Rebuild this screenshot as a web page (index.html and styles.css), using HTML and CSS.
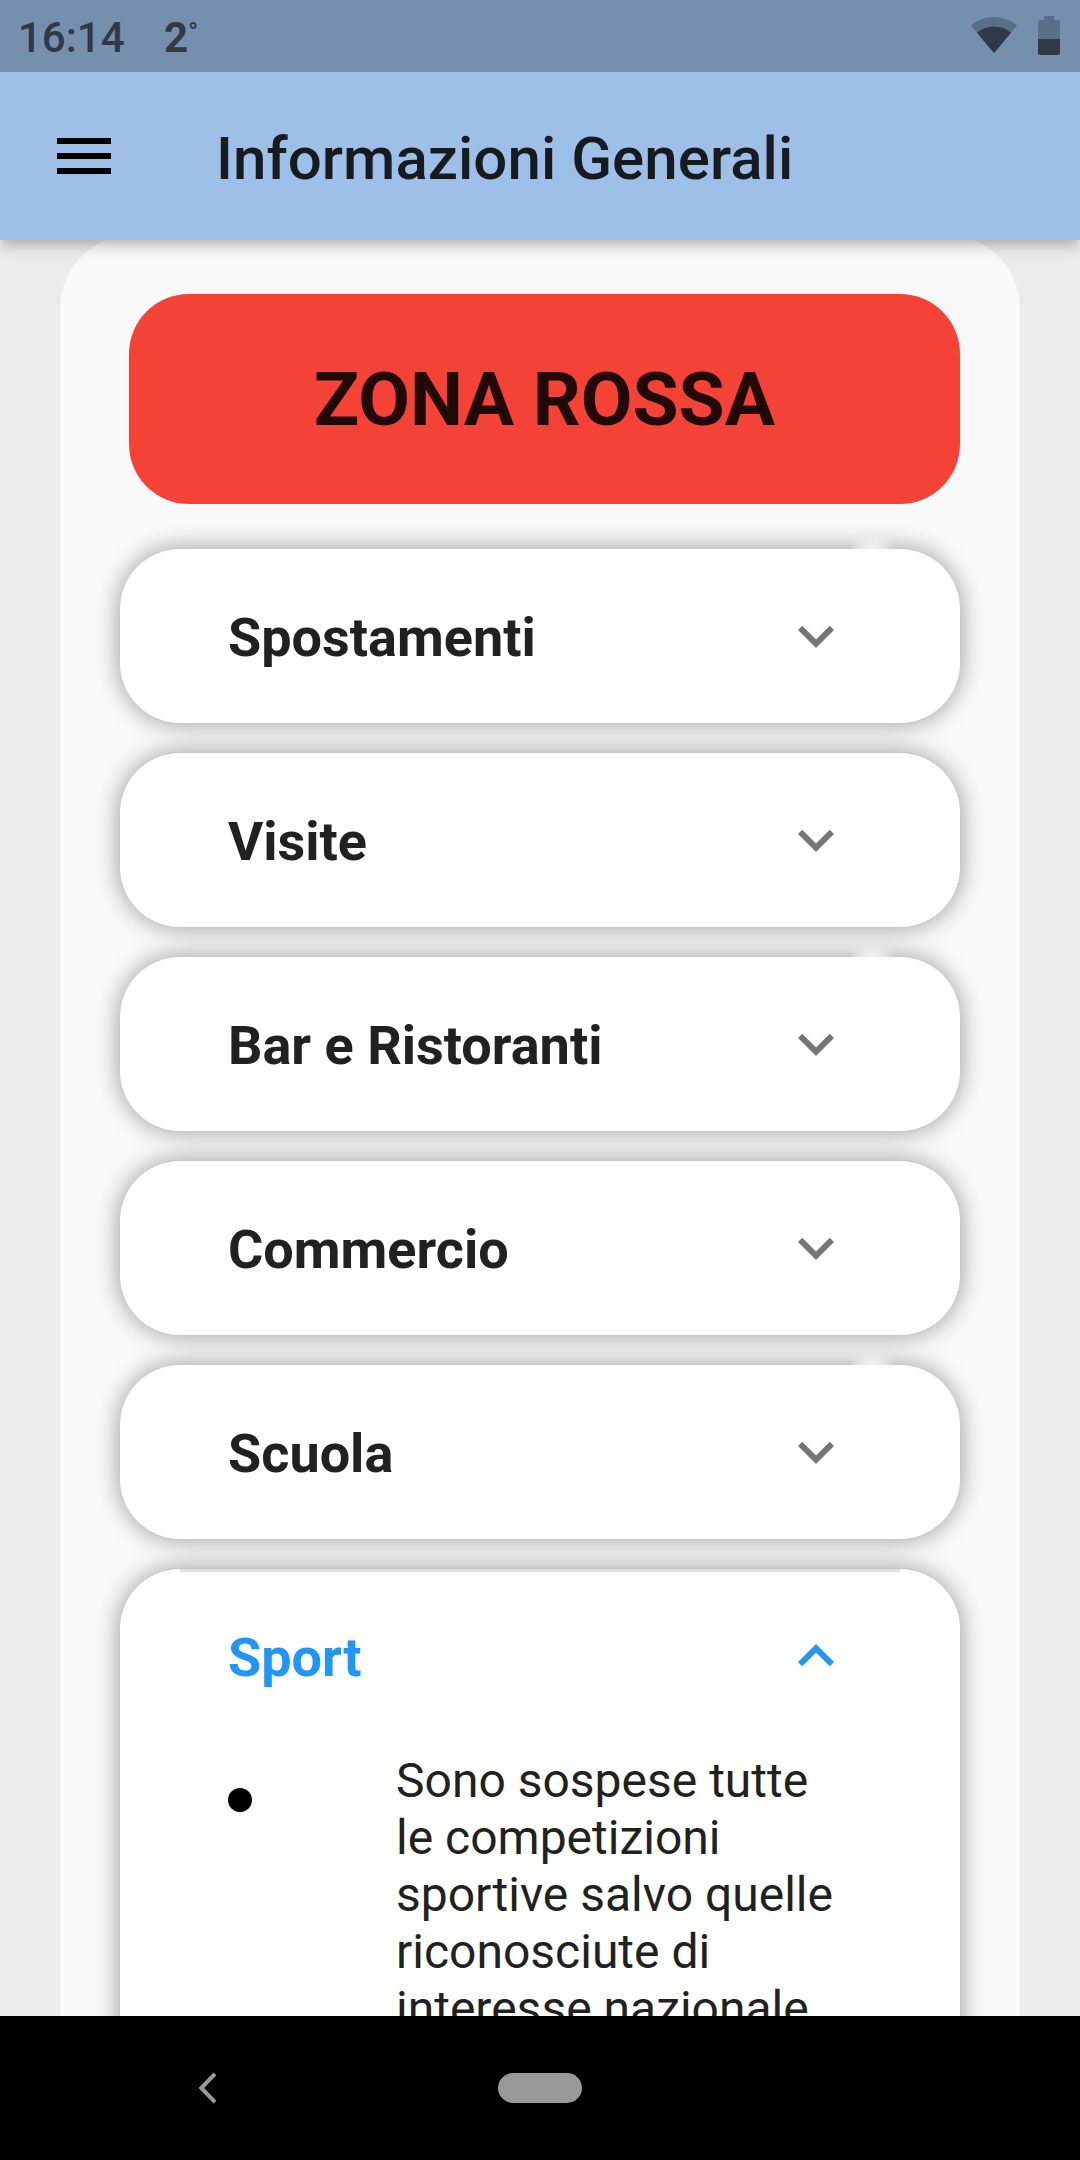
FILE: index.html
```html
<!DOCTYPE html>
<html lang="it">
<head>
    <meta charset="utf-8">
    <title>Informazioni Generali</title>
    <link rel="stylesheet" href="styles.css">
</head>
<body>
    <div class="status-bar">
        <span class="clock">16:14</span>
        <span class="temperature">2<span class="degree">°</span></span>
        <svg class="wifi" width="46" height="36" viewBox="0 0 46 36">
            <path d="M0.8 7.5Q10 0 23 0T45.2 7.5Q46 8.500 45.200 9.600L24 35Q23 36 22 35L0.800 9.600Q0 8.500 0.800 7.500Z" fill="#5a6f87"/>
            <path d="M6 15.800Q13.500 9.500 23 9.500T40 15.800L24 35Q23 36 22 35Z" fill="#303a46"/>
        </svg>
        <svg class="battery" width="22" height="39" viewBox="0 0 22 39">
            <path d="M6 0H16V4H20.500L22 5.500V23H0V5.500L1.500 4H6Z" fill="#5a6f87"/>
            <path d="M0 23H22V37.500L20.500 39H1.500L0 37.500Z" fill="#303a46"/>
        </svg>
    </div>

    <header class="app-bar">
        <svg class="menu" width="54" height="36" viewBox="0 0 54 36">
            <path d="M0 0H54V6H0ZM0 15H54V21H0ZM0 30H54V36H0Z"/>
        </svg>
        <h1>Informazioni Generali</h1>
    </header>

    <main class="content">
        <div class="sheet">
            <div class="zone">ZONA ROSSA</div>

            <div class="panels">
                <section class="panel notch">
                    <div class="panel-header">
                        <h2>Spostamenti</h2>
                        <svg class="chevron" width="72" height="72" viewBox="0 0 24 24"><path d="M16.590 8.590L12 13.170 7.410 8.590 6 10l6 6 6-6z"/></svg>
                    </div>
                </section>
                <section class="panel">
                    <div class="panel-header">
                        <h2>Visite</h2>
                        <svg class="chevron" width="72" height="72" viewBox="0 0 24 24"><path d="M16.590 8.590L12 13.170 7.410 8.590 6 10l6 6 6-6z"/></svg>
                    </div>
                </section>
                <section class="panel notch">
                    <div class="panel-header">
                        <h2>Bar e Ristoranti</h2>
                        <svg class="chevron" width="72" height="72" viewBox="0 0 24 24"><path d="M16.590 8.590L12 13.170 7.410 8.590 6 10l6 6 6-6z"/></svg>
                    </div>
                </section>
                <section class="panel">
                    <div class="panel-header">
                        <h2>Commercio</h2>
                        <svg class="chevron" width="72" height="72" viewBox="0 0 24 24"><path d="M16.590 8.590L12 13.170 7.410 8.590 6 10l6 6 6-6z"/></svg>
                    </div>
                </section>
                <section class="panel notch">
                    <div class="panel-header">
                        <h2>Scuola</h2>
                        <svg class="chevron" width="72" height="72" viewBox="0 0 24 24"><path d="M16.590 8.590L12 13.170 7.410 8.590 6 10l6 6 6-6z"/></svg>
                    </div>
                </section>
                <section class="panel open">
                    <div class="divider"></div>
                    <div class="panel-header">
                        <h2>Sport</h2>
                        <svg class="chevron" width="72" height="72" viewBox="0 0 24 24"><path d="M12 8l-6 6 1.410 1.410L12 10.830l4.590 4.580L18 14z"/></svg>
                    </div>
                    <div class="item">
                        <span class="bullet"></span>
                        <p>Sono sospese tutte<br>le competizioni<br>sportive salvo quelle<br>riconosciute di<br>interesse nazionale</p>
                    </div>
                </section>
            </div>
        </div>
    </main>

    <nav class="nav-bar">
        <svg class="back" width="18" height="32" viewBox="0 0 18 32"><path d="M17 1.800L3.300 16L17 30.200"/></svg>
        <span class="home"></span>
    </nav>
</body>
</html>
```
FILE: styles.css
```css
* {
    box-sizing: border-box;
}

body {
    margin: 0;
    width: 1080px;
    height: 2160px;
    display: flex;
    flex-direction: column;
    overflow: hidden;
    font-family: Roboto, "Liberation Sans", sans-serif;
    color: #212121;
    background-color: #ececec;
}

h1, h2, p {
    margin: 0;
}

svg {
    display: block;
    flex: none;
}

/* system bar */
.status-bar {
    height: 72px;
    flex: none;
    display: flex;
    padding: 0 20px 0 18px;
    background-color: #758fad;
    color: #303a46;
    font-size: 42px;
    line-height: 76px;
    font-weight: 500;
    z-index: 2;
}

.clock {
    width: 146px;
}

.temperature {
    font-weight: 700;
}

.degree {
    font-size: 26px;
    line-height: 1;
    vertical-align: 11px;
}

.wifi {
    margin: 17px 0 0 auto;
}

.battery {
    margin: 16px 0 0 21px;
}

.app-bar {
    height: 168px;
    flex: none;
    display: flex;
    align-items: center;
    padding: 0 57px;
    background-color: #9dbfe8;
    box-shadow: 0 6px 12px -3px rgba(0, 0, 0, 0.2), 0 12px 15px rgba(0, 0, 0, 0.06), 0 3px 12px rgba(0, 0, 0, 0.06);
    z-index: 1;
}

.app-bar h1 {
    margin: 6px 0 0 105px;
    font-size: 60px;
    line-height: 72px;
    letter-spacing: 0.05px;
    font-weight: 500;
    color: #161b20;
}

.content {
    flex: 1;
    min-height: 0;
    overflow: hidden;
    padding: 0 60px;
}

.sheet {
    height: 1900px;
    margin-top: -6px;
    padding: 60px 60px 0;
    border-radius: 75px;
    background-color: #f9f9f9;
}

.zone {
    height: 210px;
    margin-left: 9px;
    border-radius: 60px;
    background-color: #f44336;
    color: #200907;
    font-size: 75px;
    line-height: 211px;
    font-weight: 700;
    text-align: center;
}

.panels {
    display: flex;
    flex-direction: column;
    gap: 30px;
    margin-top: 45px;
}

.panel {
    position: relative;
    flex: none;
    height: 174px;
    border-radius: 60px;
    background-color: #fff;
    box-shadow: 0 0 24px rgba(0, 0, 0, 0.4);
}

/* lighter spot in the shadow above the card */
.notch::before {
    content: "";
    position: absolute;
    top: -18px;
    right: 64px;
    width: 48px;
    height: 18px;
    background: linear-gradient(to bottom, rgba(240, 240, 240, 0), #efefef 80%);
    mask-image: linear-gradient(to right, transparent, #000 40%, #000 60%, transparent);
}

.panel.open {
    height: 900px;
}

.divider {
    position: absolute;
    top: 0;
    left: 60px;
    right: 60px;
    height: 3px;
    background-color: #e0e0e0;
}

.panel-header {
    height: 174px;
    display: flex;
    align-items: center;
    justify-content: space-between;
    padding: 0 108px;
}

.panel-header h2 {
    margin-top: 3px;
    font-size: 54px;
    font-weight: 700;
}

.chevron {
    fill: #757575;
}

.open h2 {
    color: #2196f3;
}

.open .chevron {
    fill: #2196f3;
}

.item {
    display: flex;
    padding: 9px 108px 0;
}

.bullet {
    width: 24px;
    height: 24px;
    flex: none;
    margin-top: 36px;
    border-radius: 50%;
    background-color: #000;
}

.item p {
    margin-left: 144px;
    font-size: 48px;
    line-height: 57px;
    white-space: nowrap;
}

/* bottom navigation */
.nav-bar {
    height: 144px;
    flex: none;
    display: flex;
    align-items: center;
    padding-left: 198px;
    background-color: #000;
    z-index: 1;
}

.back {
    fill: none;
    stroke: #999;
    stroke-width: 4px;
}

.home {
    width: 84px;
    height: 30px;
    margin-left: 282px;
    border-radius: 15px;
    background-color: #999;
}
```
